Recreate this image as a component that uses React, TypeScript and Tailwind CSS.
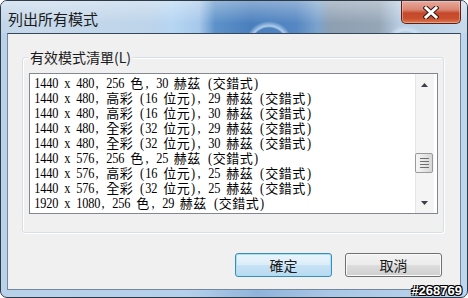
import React from "react";

const rows = [
  "1440 x 480, 256 色, 30 赫茲 (交錯式)",
  "1440 x 480, 高彩 (16 位元), 29 赫茲 (交錯式)",
  "1440 x 480, 高彩 (16 位元), 30 赫茲 (交錯式)",
  "1440 x 480, 全彩 (32 位元), 29 赫茲 (交錯式)",
  "1440 x 480, 全彩 (32 位元), 30 赫茲 (交錯式)",
  "1440 x 576, 256 色, 25 赫茲 (交錯式)",
  "1440 x 576, 高彩 (16 位元), 25 赫茲 (交錯式)",
  "1440 x 576, 全彩 (32 位元), 25 赫茲 (交錯式)",
  "1920 x 1080, 256 色, 29 赫茲 (交錯式)",
];

// MingLiU style: half width cells for ASCII, full width cells for CJK
function Row({ text }: { text: string }) {
  return (
    <div className="flex h-[15px] items-center whitespace-nowrap leading-[15px]">
      {Array.from(text).map((ch, i) =>
        ch.charCodeAt(0) < 128 ? (
          <span key={i} className="inline-block w-[6px] scale-x-[0.88] text-center text-[14px]">
            {ch === " " ? "\u00a0" : ch}
          </span>
        ) : (
          <span key={i} className="inline-block w-[13.5px] text-center text-[13px]">
            {ch}
          </span>
        )
      )}
    </div>
  );
}

function Scrollbar() {
  return (
    <div className="flex h-full w-[19px] flex-col bg-[#f4f4f4] shadow-[inset_1px_0_0_#e6e6e6]">
      <div className="flex h-[21px] items-center justify-center">
        <svg width="7" height="4" viewBox="0 0 7 4">
          <path d="M0 4 L3.5 0 L7 4 Z" fill="#3b3f46" />
        </svg>
      </div>
      <div className="h-[58px]" />
      <div className="flex h-[20px] w-[18px] flex-col items-center justify-center gap-[2px] rounded-[2px] border border-[#9a9a9a] bg-[linear-gradient(90deg,#f7f7f7,#e6e6e6_50%,#d6d6d6)]">
        <div className="h-px w-[9px] bg-[#6f6f6f]" />
        <div className="h-px w-[9px] bg-[#6f6f6f]" />
        <div className="h-px w-[9px] bg-[#6f6f6f]" />
        <div className="h-px w-[9px] bg-[#6f6f6f]" />
      </div>
      <div className="flex-1" />
      <div className="flex h-[21px] items-center justify-center">
        <svg width="7" height="4" viewBox="0 0 7 4">
          <path d="M0 0 L7 0 L3.5 4 Z" fill="#3b3f46" />
        </svg>
      </div>
    </div>
  );
}

function CloseButton() {
  return (
    <div className="mr-[6px] flex h-[23px] w-[60px] items-center justify-center rounded-b-[5px] border border-t-0 border-[#5b2016] bg-[linear-gradient(180deg,#e9aa9c_0%,#d98572_40%,#c5472a_55%,#c9502f_80%,#db7a52_100%)] shadow-[inset_0_0_0_1px_rgba(255,210,200,0.45)]">
      <svg width="16" height="13" viewBox="0 0 16 13">
        <path d="M3 2 L13 11 M13 2 L3 11" stroke="#3a1a14" strokeWidth="5" strokeLinecap="square" />
        <path d="M3 2 L13 11 M13 2 L3 11" stroke="#ffffff" strokeWidth="3" strokeLinecap="square" />
      </svg>
    </div>
  );
}

export default function App() {
  return (
    <div className="relative h-[298px] w-[468px] bg-white font-['Noto_Sans_CJK_TC',sans-serif] text-[#1b1b1b]">
      <div className="flex h-full w-full flex-col overflow-hidden rounded-[7px] border border-[#2e3a46] bg-[linear-gradient(90deg,#b9d2ea,#b5d0ec_40%,#8fb4dc_55%,#a8c6e6_70%,#bed6ee)]">
        {/* Title bar */}
        <div className="flex h-[32px] shrink-0 items-start justify-between bg-[linear-gradient(180deg,rgba(255,255,255,0.35),rgba(255,255,255,0)_70%),radial-gradient(circle_at_268px_44px,transparent_0_17px,rgba(205,228,250,0.75)_19px,transparent_24px),radial-gradient(circle_at_405px_46px,transparent_0_15px,rgba(215,232,250,0.7)_17px,transparent_22px),linear-gradient(90deg,#c3d6e9_0px,#c7d9ea_40px,#bdd4ea_150px,#b6d6f3_172px,#a7c8ea_198px,#5e92c9_214px,#4a7fbd_250px,#5587c2_295px,#7ba3cd_316px,#8e9fb2_330px,#95a6b7_378px,#b7cce1_398px,#c8daec_468px)]">
          <div className="self-center pl-[7px] pt-[3px] text-[15px] leading-[18px] text-[#1a1a1a]">
            列出所有模式
          </div>
          <CloseButton />
        </div>

        {/* Client area */}
        <div className="mx-[6px] flex h-[257px] shrink-0 flex-col border border-[#72869c] border-t-[#35485b] bg-[#f0f0f0]">
          <div className="ml-[14px] mt-[23px] flex h-[176px] w-[422px] flex-col rounded-[3px] border border-[#d5dfe5] px-[6px] shadow-[inset_1px_1px_0_#ffffff,1px_1px_0_#ffffff]">
            <div className="-mt-[8px] ml-[-1px] w-fit bg-[#f0f0f0] px-[2px] text-[14px] leading-[15px]">
              有效模式清單(L)
            </div>
            <div className="mt-[8px] flex h-[141px] w-[409px] border border-[#828790] bg-white">
              <div className="flex-1 pl-[4px] pt-[2px] font-['Liberation_Serif','Noto_Sans_CJK_TC',serif] text-black">
                {rows.map((r, i) => (
                  <Row key={i} text={r} />
                ))}
              </div>
              <Scrollbar />
              <div className="w-[3px]" />
            </div>
          </div>

          <div className="mt-[20px] flex justify-end gap-[13px] pr-[18px]">
            <button className="flex h-[24px] w-[97px] items-center justify-center rounded-[3px] border border-[#3c8cb8] bg-[linear-gradient(180deg,#eaf5fc_0%,#dcedf9_48%,#c7e2f5_52%,#b9d9f0_100%)] text-[14px] leading-none shadow-[inset_0_0_0_1px_#a8e0f8]">
              確定
            </button>
            <button className="flex h-[24px] w-[97px] items-center justify-center rounded-[3px] border border-[#707070] bg-[linear-gradient(180deg,#f3f3f3_0%,#ebebeb_48%,#dddddd_52%,#cfcfcf_100%)] text-[14px] leading-none shadow-[inset_0_0_0_1px_#fbfbfb]">
              取消
            </button>
          </div>
        </div>
      </div>

      {/* watermark */}
      <div className="absolute bottom-[1px] right-[6px] font-['Liberation_Sans',sans-serif] text-[13px] font-bold leading-[13px] text-white [text-shadow:-1px_-1px_0_#000,1px_-1px_0_#000,-1px_1px_0_#000,1px_1px_0_#000]">
        #268769
      </div>
    </div>
  );
}
